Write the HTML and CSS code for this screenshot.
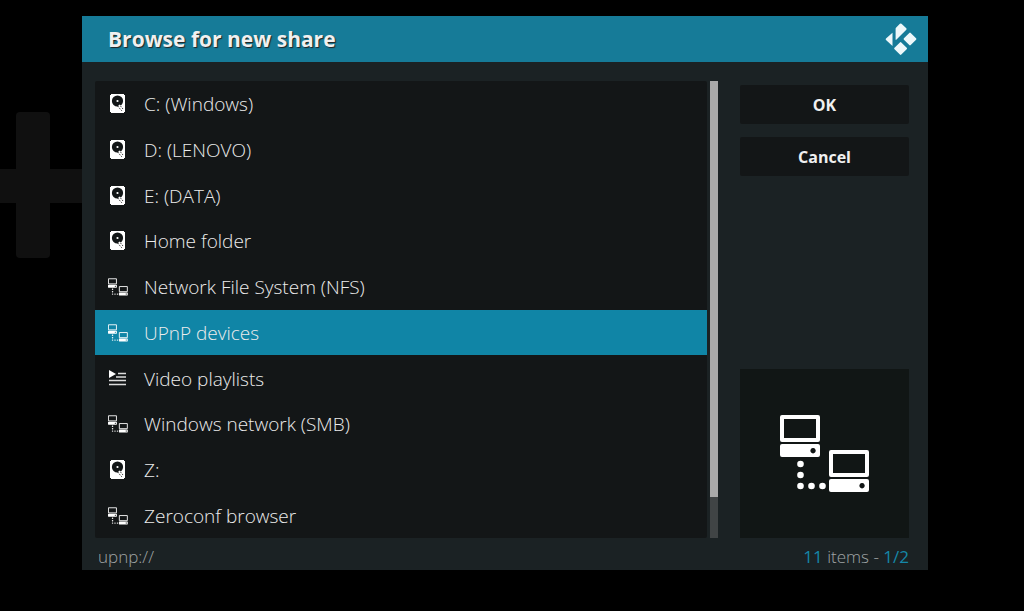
FILE: index.html
```html
<!DOCTYPE html>
<html lang="en">

<head>
    <meta charset="UTF-8">
    <meta name="viewport" content="width=device-width, initial-scale=1.0">
    <title>Browse for new share</title>
    <link rel="stylesheet" href="styles.css">
</head>

<body>
    <!-- shared icons -->
    <svg class="sprite" aria-hidden="true">
        <symbol id="disk" viewBox="0 0 20 20">
            <path fill="#fff" d="M2 0h15v19H2z" />
            <circle cx="9.500" cy="7" r="5.6" fill="#121617" />
            <circle cx="9.500" cy="7" r="1.1" fill="#fff" />
            <path d="M11 11l4 5" stroke="#fff" stroke-width="2" />
            <path d="M9.500 12l4.500 5M12.500 12l2.500 3" stroke="#444" stroke-width="1" stroke-dasharray="1.5 1" />
            <path fill="#121617" d="M2 0h1v1H2zM16 0h1v1h-1zM2 18h1v1H2zM16 18h1v1h-1z" />
        </symbol>
        <symbol id="network" viewBox="0 0 90 78">
            <path fill="none" stroke="#fff" stroke-width="4" stroke-linejoin="round" d="M2 2h36v23H2zM51 37h36v23H51z" />
            <path fill="#fff" fill-rule="evenodd" d="M2 29h36q2 0 2 2v9q0 2-2 2H2q-2 0-2-2V31q0-2 2-2zM33 33a2.700 2.700 0 1 0 .1 0zM51 64h36q2 0 2 2v9q0 2-2 2H51q-2 0-2-2V66q0-2 2-2zM82 68a2.700 2.700 0 1 0 .1 0z" />
            <g fill="#fff">
                <circle cx="20.500" cy="49" r="3.300" />
                <circle cx="20.500" cy="60" r="3.300" />
                <circle cx="20.500" cy="71" r="3.300" />
                <circle cx="31.500" cy="71" r="3.300" />
                <circle cx="42.500" cy="71" r="3.300" />
            </g>
        </symbol>
        <symbol id="playlist" viewBox="0 0 20 20">
            <path fill="#fff" d="M1 1l7 4-7 4z" />
            <path stroke="#ddd" stroke-width="1.300" d="M10 4.500h8M8 8h10M1 11.500h17M1 15.500h17" />
        </symbol>
    </svg>

    <div class="backdrop-plus"></div>

    <main class="dialog">
        <header>
            <h1>Browse for new share</h1>
            <svg class="logo" viewBox="0 0 32 32" role="img" aria-label="Kodi">
                <g fill="#eef8fa">
                    <path d="M16.500 .8q-.8-.8-1.600 0L11 4.800q-.4.400-.4 1v10.400q0 1.200.9.400L21.300 6.700q.7-.7 0-1.400z" />
                    <path d="M7.500 9.800L1 15.500q-.7.700 0 1.400l6.500 6z" />
                    <rect x="20.200" y="11.200" width="9.600" height="9.600" rx="1" transform="rotate(45 25 16)" />
                    <rect x="10.800" y="20.700" width="9.600" height="9.600" rx="1" transform="rotate(45 15.600 25.500)" />
                </g>
            </svg>
        </header>

        <div class="content">
            <ul class="shares">
                <li><button><svg><use href="#disk" /></svg>C: (Windows)</button></li>
                <li><button><svg><use href="#disk" /></svg>D: (LENOVO)</button></li>
                <li><button><svg><use href="#disk" /></svg>E: (DATA)</button></li>
                <li><button><svg><use href="#disk" /></svg>Home folder</button></li>
                <li><button><svg><use href="#network" /></svg>Network File System (NFS)</button></li>
                <li><button class="selected" aria-current="true"><svg><use href="#network" /></svg>UPnP devices</button></li>
                <li><button><svg><use href="#playlist" /></svg>Video playlists</button></li>
                <li><button><svg><use href="#network" /></svg>Windows network (SMB)</button></li>
                <li><button><svg><use href="#disk" /></svg>Z:</button></li>
                <li><button><svg><use href="#network" /></svg>Zeroconf browser</button></li>
            </ul>
            <div class="scrollbar">
                <div class="thumb"></div>
            </div>
            <aside>
                <button class="action">OK</button>
                <button class="action">Cancel</button>
                <div class="preview">
                    <svg><use href="#network" /></svg>
                </div>
            </aside>
        </div>

        <footer>
            <span>upnp://</span>
            <span><b>11</b> items - <b>1/2</b></span>
        </footer>
    </main>
</body>

</html>
```

FILE: styles.css
```css
* {
    box-sizing: border-box;
    margin: 0;
    padding: 0;
}

body {
    background: #000;
    color: #ececec;
    font-family: "Open Sans", "Noto Sans", sans-serif;
    font-kerning: none;
    display: flex;
    min-height: 100vh;
    padding: 16px 96px 41px 82px;
}

button {
    appearance: none;
    border: none;
    background: none;
    color: inherit;
    font-family: inherit;
    cursor: pointer;
}

.sprite {
    position: absolute;
    width: 0;
    height: 0;
}

/* big plus behind the dialog, cut off by the left edge */
.backdrop-plus {
    position: absolute;
    top: 112px;
    left: 16px;
    width: 34px;
    height: 146px;
    border-radius: 4px;
    background: #101010;
}

.backdrop-plus::after {
    content: "";
    position: absolute;
    top: 57px;
    left: -16px;
    width: 100px;
    height: 34px;
    background: #101010;
}

.dialog {
    position: relative;
    flex: 1;
    display: flex;
    flex-direction: column;
    background: #1b2224;
}

header {
    display: flex;
    align-items: center;
    justify-content: space-between;
    height: 46px;
    padding: 0 11px 0 26px;
    background: #167b98;
}

header h1 {
    font-size: 21px;
    font-weight: 700;
    color: #f0f0f0;
    text-shadow: 1px 1px 1px #222;
}

.logo {
    width: 32px;
    height: 32px;
}

.content {
    flex: 1;
    display: flex;
    padding: 19px 19px 0 13px;
}

.shares {
    flex: 1;
    display: grid;
    grid-auto-rows: 1fr;
    list-style: none;
    background: #131617;
    border-radius: 2px;
    margin-right: 3px;
}

.shares li {
    display: flex;
}

.shares button {
    flex: 1;
    display: flex;
    align-items: center;
    gap: 16px;
    padding: 1px 13px 0;
    font-size: 19px;
    font-weight: 300;
    text-align: left;
}

.shares svg {
    width: 20px;
    height: 20px;
}

.shares .selected {
    background: #1085a6;
}

.scrollbar {
    width: 8px;
    background: #404445;
    margin-right: 22px;
}

.thumb {
    height: 91%;
    background: #a9a9a9;
}

aside {
    width: 169px;
    display: flex;
    flex-direction: column;
    gap: 13px;
    padding-top: 4px;
}

.action {
    height: 39px;
    border-radius: 2px;
    background: #131617;
    color: #f0f0f0;
    font-size: 16px;
    font-weight: 700;
}

.preview {
    display: flex;
    align-items: center;
    justify-content: center;
    aspect-ratio: 1;
    margin-top: auto;
    background: #111615;
}

.preview svg {
    width: 90px;
    height: 78px;
}

footer {
    display: flex;
    justify-content: space-between;
    align-items: center;
    height: 32px;
    padding: 4px 19px 0 16px;
    font-size: 17px;
    font-weight: 300;
    color: #a0a5a6;
}

footer b {
    font-weight: 400;
    color: #1587a8;
}
```
